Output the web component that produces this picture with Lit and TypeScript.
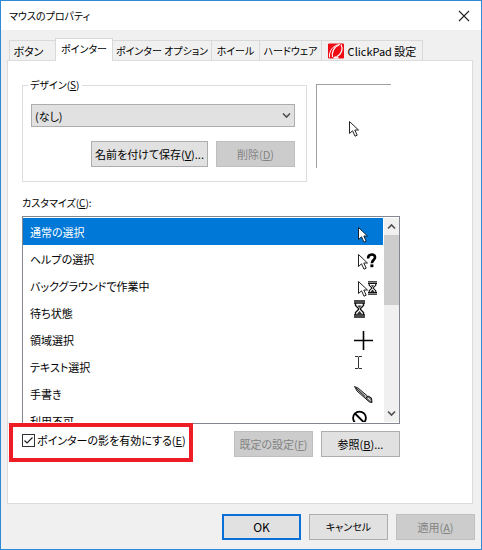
import { LitElement, html, css, svg } from "lit";
import { customElement, state } from "lit/decorators.js";

const arrow = (x: number, y: number, ink = "#222") => svg`
  <path transform="translate(${x} ${y})" d="M.5 .5V12.5L3.5 9.8L6 15.2L8.2 14.2L5.8 9H9.5Z"
    fill="#fff" stroke=${ink} stroke-width="1"/>`;

const hourglass = (x: number, y: number, w: number, h: number) => svg`
  <svg x=${x} y=${y} width=${w} height=${h} viewBox="0 0 11 18" preserveAspectRatio="none">
    <path d="M0 1H11M0 3H11M0 15H11M0 17H11" stroke="#111" stroke-width="1.4"/>
    <path d="M1.5 3V5.5L4.5 8.5V9.5L1.5 12.5V15M9.5 3V5.5L6.5 8.5V9.5L9.5 12.5V15" fill="none" stroke="#111" stroke-width="1.4"/>
    <path d="M3.5 5.5H7.5L5.5 8ZM2.5 14.5L5.5 11L8.5 14.5Z" fill="#333"/>
  </svg>`;

const icons = {
  normal: arrow(15, 9, "#123"),
  help: svg`${arrow(15, 9)}
    <path d="M25 13.5C25 8.300 32.500 8.300 32 12.600C31.700 15 28.900 15.300 28.900 18.200" fill="none" stroke="#000" stroke-width="2.600"/>
    <rect x="27.4" y="19.4" width="3" height="2.8" fill="#000"/>`,
  background: svg`${arrow(15, 9)}${hourglass(25, 9, 9, 14)}`,
  wait: hourglass(11, 1, 11, 18),
  cross: svg`<path d="M11 14.5H30M20.5 5V24" stroke="#000" stroke-width="1.6"/>`,
  text: svg`<path d="M12 3.5H15L15.5 4L16 3.5H19M15.5 4V15M12 15.5H15L15.5 15L16 15.5H19" fill="none" stroke="#333" stroke-width="1"/>`,
  pen: svg`
    <path d="M11.500 6.500L15 8L24.500 16L22.500 18.500L14 11Z" fill="#bbb" stroke="#222" stroke-width="1"/>
    <path d="M13 8L22 16.500" stroke="#222" stroke-width="1"/>
    <path d="M22.500 18.500L25 16L28.500 18L29 22.500L26.500 22Z" fill="#777" stroke="#111"/>
    <path d="M25 18L27.500 20.500" stroke="#eee"/>`,
  no: svg`<circle cx="16.5" cy="11" r="6.4" fill="#fff" stroke="#000" stroke-width="1.8"/>
    <path d="M12 6.5L21 15.5" stroke="#000" stroke-width="1.8"/>`,
};

const pointers: { name: string; icon: keyof typeof icons }[] = [
  { name: "通常の選択", icon: "normal" },
  { name: "ヘルプの選択", icon: "help" },
  { name: "バックグラウンドで作業中", icon: "background" },
  { name: "待ち状態", icon: "wait" },
  { name: "領域選択", icon: "cross" },
  { name: "テキスト選択", icon: "text" },
  { name: "手書き", icon: "pen" },
  { name: "利用不可", icon: "no" },
];

@customElement("app-root")
export class AppRoot extends LitElement {
  @state() private selected = 0;

  static styles = css`
    :host {
      display: flex;
      flex-direction: column;
      box-sizing: border-box;
      min-height: 100vh;
      border: 1px solid #2e8ad4;
      background: #f0f0f0;
      color: #000;
      font: 11px/16px "Noto Sans CJK JP", sans-serif;
      font-feature-settings: "palt";
    }
    * { box-sizing: border-box; }
    button, select, input { font: inherit; font-feature-settings: inherit; color: inherit; margin: 0; }
    .title {
      display: flex;
      align-items: center;
      justify-content: space-between;
      height: 29px;
      padding: 0 11px 0 8px;
      background: #fff;
    }
    .title h1 { margin: 0; font-size: 10px; font-weight: 400; }
    .close { display: flex; padding: 0; border: 0; background: none; }
    .tabs {
      display: flex;
      align-items: flex-end;
      padding: 8px 8px 0;
      font-size: 10px;
    }
    .tab {
      display: flex;
      align-items: center;
      justify-content: center;
      gap: 4px;
      height: 20px;
      padding: 0;
      border: 1px solid #d9d9d9;
      border-width: 1px 1px 0 0;
      background: #f0f0f0;
      white-space: nowrap;
    }
    .tab:first-child { border-width: 1px 0 0 1px; padding-right: 8px; font-size: 11px; }
    .tab.active {
      position: relative;
      height: 23px;
      margin-bottom: -1px;
      padding-bottom: 2px;
      border-left-width: 1px;
      background: #fff;
    }
    .w46 { width: 46px; }
    .w48 { width: 48px; }
    .w58 { width: 58px; }
    .w99 { width: 99px; }
    .w62 { width: 62px; }
    .w101 { width: 101px; font-size: 11px; }
    .panel {
      flex: 1;
      margin: 0 8px 0 6px;
      padding: 16px 72px 40px 14px;
      border: 1px solid #dcdcdc;
      background: #fff;
    }
    .scheme { display: flex; gap: 9px; }
    fieldset {
      flex: 1;
      min-width: 0;
      margin: 0;
      padding: 11px 11px 14px 8px;
      border: 1px solid #dcdcdc;
    }
    legend { margin-left: -3px; padding: 0 3px 0 2px; font-size: 10px; }
    .combo { position: relative; }
    .combo select {
      display: block;
      width: 100%;
      height: 23px;
      padding: 0 3px;
      border: 1px solid #adadad;
      border-radius: 0;
      background: #e1e1e1;
      appearance: none;
    }
    .combo svg { position: absolute; right: 4px; top: 8px; pointer-events: none; }
    .row { display: flex; justify-content: flex-end; gap: 8px; }
    fieldset .row { margin-top: 14px; }
    .btn {
      width: 79px;
      height: 26px;
      padding: 0;
      border: 1px solid #adadad;
      border-radius: 0;
      background: #e1e1e1;
      white-space: nowrap;
    }
    .btn.wide { width: 117px; }
    .btn.default { border: 2px solid #0a6fd6; font-size: 12px; }
    .btn.kana { font-size: 10px; }
    .btn:disabled { border-color: #bfbfbf; background: #ccc; color: #838383; }
    .preview {
      width: 75px;
      height: 84px;
      margin: 7px 9px 0 0;
      border: solid #a0a0a0;
      border-width: 1px 0 0 1px;
    }
    .preview svg, .item svg { display: block; }
    .label { margin-top: 13px; font-size: 10px; }
    .list {
      display: flex;
      height: 208px;
      margin-top: 5px;
      padding: 1px 0 1px 0;
      border: 1px solid #828790;
    }
    .items {
      flex: 1;
      margin: 0;
      padding: 0;
      overflow: hidden;
      list-style: none;
    }
    .item {
      display: flex;
      align-items: center;
      justify-content: space-between;
      height: 27px;
      padding-left: 7px;
    }
    .item.selected { background: #0078d7; color: #fff; }
    .scroll {
      display: flex;
      flex-direction: column;
      width: 15px;
      margin-left: 1px;
      background: #f0f0f0;
    }
    .scroll button { display: flex; align-items: center; justify-content: center; height: 17px; padding: 0; border: 0; background: none; }
    .track { flex: 1; }
    .thumb { height: 70px; background: #cdcdcd; }
    .options {
      display: flex;
      align-items: flex-start;
      justify-content: space-between;
      margin-left: -13px;
    }
    .callout {
      width: 184px;
      height: 39px;
      margin-top: -1px;
      padding: 5px 0 0 9px;
      border: 4px solid #ee1c25;
    }
    .check { display: flex; align-items: center; gap: 2px; white-space: nowrap; }
    .box { display: grid; }
    .box input, .box svg { grid-area: 1 / 1; }
    .box input {
      width: 13px;
      height: 13px;
      border: 1px solid #333;
      background: #fff;
      appearance: none;
    }
    .box svg { pointer-events: none; }
    .box input:not(:checked) + svg { visibility: hidden; }
    .options .row { margin-top: 7px; }
    .footer { padding: 10px 6px 9px; }
  `;

  private chevron(up: boolean) {
    return html`<svg width="9" height="7" viewBox="0 0 9 7" aria-hidden="true">
      <path d=${up ? "M1 5.5L4.5 2L8 5.5" : "M1 1.5L4.5 5L8 1.5"} fill="none" stroke="#505050" stroke-width="1.6"/></svg>`;
  }

  render() {
    return html`
      <header class="title">
        <h1>マウスのプロパティ</h1>
        <button class="close" aria-label="閉じる">
          <svg width="12" height="12" viewBox="0 0 12 12"><path d="M1 1L11 11M11 1L1 11" stroke="#222" stroke-width="1.1"/></svg>
        </button>
      </header>
      <div class="tabs" role="tablist">
        <button class="tab w46" role="tab">ボタン</button>
        <button class="tab active w58" role="tab" aria-selected="true">ポインター</button>
        <button class="tab w99" role="tab">ポインター オプション</button>
        <button class="tab w48" role="tab">ホイール</button>
        <button class="tab w62" role="tab">ハードウェア</button>
        <button class="tab w101" role="tab">
          <svg width="16" height="16" viewBox="0 0 16 16" aria-hidden="true">
            <rect y=".5" width="16" height="15" rx="1" fill="#f00a14"/>
            <path d="M1.500 14.500C.8 8 5 2 12 1.500" fill="none" stroke="#fff" stroke-width="1"/>
            <path d="M4.500 14C3.500 9 6 4 11 2" fill="none" stroke="#fff" stroke-width="1.200"/>
            <path d="M13 1.500C15.500 6 13.500 11 9 13.500" fill="none" stroke="#fff" stroke-width="1.200"/>
            <path d="M5 15.500C6 12.500 10 12.500 11 15.500Z" fill="#fff"/>
          </svg>
          ClickPad 設定
        </button>
      </div>
      <main class="panel" role="tabpanel">
        <div class="scheme">
          <fieldset>
            <legend><label for="scheme">デザイン(<u>S</u>)</label></legend>
            <div class="combo">
              <select id="scheme"><option>(なし)</option></select>
              ${this.chevron(false)}
            </div>
            <div class="row">
              <button class="btn wide">名前を付けて保存(<u>V</u>)...</button>
              <button class="btn" disabled>削除(<u>D</u>)</button>
            </div>
          </fieldset>
          <div class="preview">
            <svg width="74" height="83" viewBox="0 0 74 83" aria-hidden="true">${arrow(32, 36)}</svg>
          </div>
        </div>
        <div class="label" id="custom">カスタマイズ(<u>C</u>):</div>
        <div class="list">
          <ul class="items" role="listbox" aria-labelledby="custom">
            ${pointers.map((p, i) => html`
              <li class="item ${i === this.selected ? "selected" : ""}" role="option"
                aria-selected=${i === this.selected} @click=${() => (this.selected = i)}>
                <span>${p.name}</span>
                <svg width="40" height="27" viewBox="0 0 40 27" aria-hidden="true">${icons[p.icon]}</svg>
              </li>`)}
          </ul>
          <div class="scroll">
            <button aria-label="上へ">${this.chevron(true)}</button>
            <div class="track"><div class="thumb"></div></div>
            <button aria-label="下へ">${this.chevron(false)}</button>
          </div>
        </div>
        <div class="options">
          <div class="callout">
            <label class="check">
              <span class="box">
                <input type="checkbox" checked>
                <svg width="13" height="13" viewBox="0 0 13 13"><path d="M2.500 6.500L5 9L10.500 3.500" fill="none" stroke="#222" stroke-width="1.2"/></svg>
              </span>
              <span>ポインターの影を有効にする(<u>E</u>)</span>
            </label>
          </div>
          <div class="row">
            <button class="btn" disabled>既定の設定(<u>F</u>)</button>
            <button class="btn">参照(<u>B</u>)...</button>
          </div>
        </div>
      </main>
      <footer class="footer row">
        <button class="btn default">OK</button>
        <button class="btn kana">キャンセル</button>
        <button class="btn" disabled>適用(<u>A</u>)</button>
      </footer>
    `;
  }
}
